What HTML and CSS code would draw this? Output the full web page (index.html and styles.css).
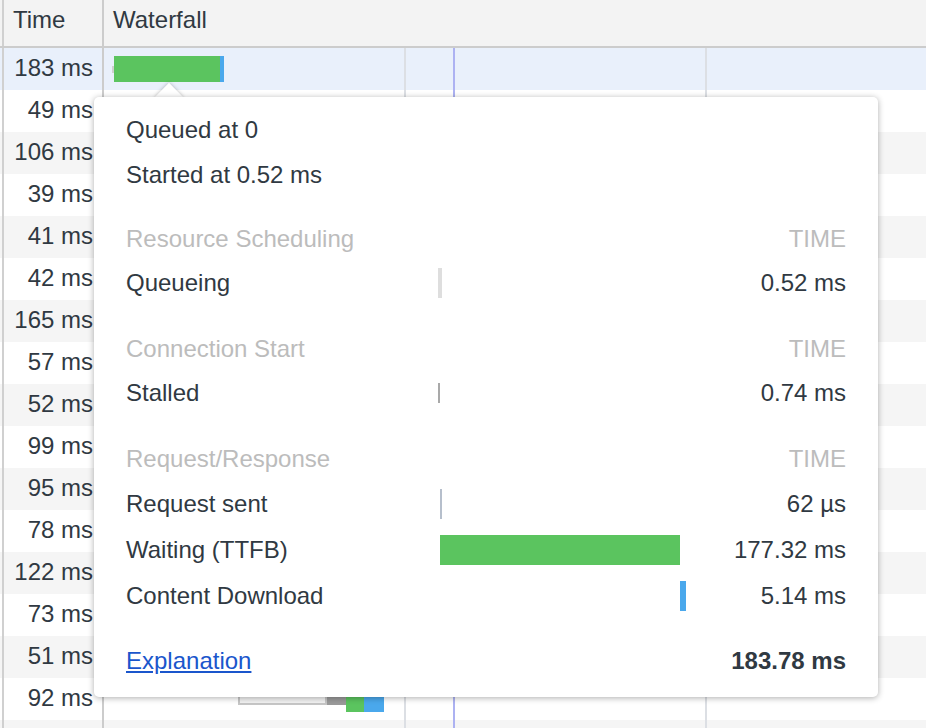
FILE: index.html
```html
<!DOCTYPE html>
<html>
<head>
<meta charset="utf-8">
<link rel="stylesheet" href="styles.css">
</head>
<body>
<div class="net">
  <div class="hdr">
    <div class="c-time">Time</div>
    <div class="c-wf">Waterfall</div>
  </div>
  <div class="rows">
    <div class="row sel"><div class="c-time">183 ms</div><div class="c-wf"><div class="wbar w1"><span class="stub"></span><span class="g" style="width:106px"></span><span class="b" style="width:4px"></span></div></div></div>
    <div class="row"><div class="c-time">49 ms</div><div class="c-wf"></div></div>
    <div class="row alt"><div class="c-time">106 ms</div><div class="c-wf"></div></div>
    <div class="row"><div class="c-time">39 ms</div><div class="c-wf"></div></div>
    <div class="row alt"><div class="c-time">41 ms</div><div class="c-wf"></div></div>
    <div class="row"><div class="c-time">42 ms</div><div class="c-wf"></div></div>
    <div class="row alt"><div class="c-time">165 ms</div><div class="c-wf"></div></div>
    <div class="row"><div class="c-time">57 ms</div><div class="c-wf"></div></div>
    <div class="row alt"><div class="c-time">52 ms</div><div class="c-wf"></div></div>
    <div class="row"><div class="c-time">99 ms</div><div class="c-wf"></div></div>
    <div class="row alt"><div class="c-time">95 ms</div><div class="c-wf"></div></div>
    <div class="row"><div class="c-time">78 ms</div><div class="c-wf"></div></div>
    <div class="row alt"><div class="c-time">122 ms</div><div class="c-wf"></div></div>
    <div class="row"><div class="c-time">73 ms</div><div class="c-wf"></div></div>
    <div class="row alt"><div class="c-time">51 ms</div><div class="c-wf"></div></div>
    <div class="row"><div class="c-time">92 ms</div><div class="c-wf"><div class="wbar w16"><span class="q" style="width:89px"></span><span class="dg" style="width:19px"></span><span class="g" style="width:18px"></span><span class="b" style="width:20px"></span></div></div></div>
    <div class="row alt"><div class="c-time"></div><div class="c-wf"></div></div>
  </div>

  <div class="popup">
    <div class="arrow"></div>
    <div class="pbody">
      <div class="prow top"><div class="lbl">Queued at 0</div></div>
      <div class="prow top"><div class="lbl">Started at 0.52 ms</div></div>

      <div class="prow sec first"><div class="lbl">Resource Scheduling</div><div class="track"></div><div class="val">TIME</div></div>
      <div class="prow"><div class="lbl">Queueing</div><div class="track"><span class="pb queue" style="margin-left:0;width:4px"></span></div><div class="val">0.52 ms</div></div>

      <div class="prow sec"><div class="lbl">Connection Start</div><div class="track"></div><div class="val">TIME</div></div>
      <div class="prow"><div class="lbl">Stalled</div><div class="track"><span class="pb stall" style="margin-left:0;width:2px"></span></div><div class="val">0.74 ms</div></div>

      <div class="prow sec"><div class="lbl">Request/Response</div><div class="track"></div><div class="val">TIME</div></div>
      <div class="prow tall"><div class="lbl">Request sent</div><div class="track"><span class="pb sent" style="margin-left:2px;width:2px"></span></div><div class="val">62 µs</div></div>
      <div class="prow tall"><div class="lbl">Waiting (TTFB)</div><div class="track"><span class="pb wait" style="margin-left:2px;width:240px"></span></div><div class="val">177.32 ms</div></div>
      <div class="prow tall"><div class="lbl">Content Download</div><div class="track"><span class="pb dl" style="margin-left:242px;width:6px"></span></div><div class="val">5.14 ms</div></div>

      <div class="prow foot"><div class="lbl"><a class="link" href="#">Explanation</a></div><div class="track"></div><div class="val total">183.78 ms</div></div>
    </div>
  </div>
</div>
</body>
</html>
```

FILE: styles.css
```css
html, body {
  margin: 0;
  padding: 0;
  background: #ffffff;
}

body {
  font-family: "Liberation Sans", Arial, Helvetica, sans-serif;
  font-size: 24px;
  color: #303942;
  width: 926px;
  height: 728px;
  overflow: hidden;
}

.net {
  position: relative;
  width: 926px;
  height: 728px;
  overflow: hidden;
}

.hdr {
  display: flex;
  height: 46px;
  background: #f3f3f3;
  border-bottom: 2px solid #cccccc;
}

.hdr .c-time,
.hdr .c-wf {
  line-height: 39px;
}

.hdr .c-time {
  text-align: left;
  padding: 0 0 0 9px;
}

.hdr .c-wf {
  padding-left: 9px;
}

.c-time {
  box-sizing: border-box;
  width: 102px;
  margin-left: 2px;
  border-left: 2px solid #d0d0d0;
  border-right: 2px solid #cccccc;
  text-align: right;
  padding-right: 9px;
  white-space: nowrap;
  flex: none;
}

.c-wf {
  flex: 1;
  min-width: 0;
}

.rows {
  display: flex;
  flex-direction: column;
}

.row {
  display: flex;
  height: 42px;
  line-height: 40px;
  background: #ffffff;
}

.row.alt {
  background: #f5f5f5;
}

.row.sel {
  background: #e9f0fb;
}

.row .c-wf {
  background-image:
    linear-gradient(#dcdfe4, #dcdfe4),
    linear-gradient(#adb2f2, #adb2f2),
    linear-gradient(#dcdfe4, #dcdfe4);
  background-size: 2px 100%, 2px 100%, 2px 100%;
  background-position: 300px 0, 349px 0, 601px 0;
  background-repeat: no-repeat;
}

.wbar {
  display: flex;
  align-items: center;
  height: 42px;
}

.wbar span {
  display: block;
  flex: none;
}

.w1 {
  padding-left: 8px;
}

.w16 {
  padding-left: 134px;
}

.wbar .stub {
  width: 2px;
  height: 7px;
  background: #cfcfcf;
}

.wbar .g {
  height: 26px;
  background: #5bc45f;
}

.wbar .b {
  height: 26px;
  background: #4aa8ec;
}

.wbar .q {
  box-sizing: border-box;
  height: 12px;
  border: 2px solid #c6c6c6;
  background: #f2f2f2;
}

.wbar .dg {
  height: 12px;
  background: #9a9a9a;
}

/* popup */
.popup {
  position: absolute;
  left: 94px;
  top: 97px;
  width: 784px;
  height: 600px;
  z-index: 5;
}

.arrow {
  position: absolute;
  left: 65px;
  top: -10px;
  width: 20px;
  height: 20px;
  background: #ffffff;
  transform: rotate(45deg);
  box-shadow: 0 0 4px rgba(0, 0, 0, 0.28);
}

.pbody {
  position: relative;
  box-sizing: border-box;
  height: 100%;
  background: #ffffff;
  border-radius: 5px;
  box-shadow: 0 1px 6px rgba(0, 0, 0, 0.32);
  padding: 10px 32px 13px 32px;
  display: flex;
  flex-direction: column;
}

.prow {
  display: grid;
  grid-template-columns: 312px 248px 160px;
  height: 44px;
  line-height: 42px;
  align-items: center;
  white-space: nowrap;
  flex: none;
}

.prow.top {
  height: 45px;
  line-height: 43px;
}

.prow.tall {
  height: 46px;
  line-height: 44px;
}

.prow.sec {
  margin-top: 22px;
  color: #bcbcbc;
}

.prow.sec.first {
  margin-top: 20px;
}

.prow.foot {
  margin-top: 20px;
}

.val {
  text-align: right;
}

.total {
  font-weight: bold;
}

.track {
  display: flex;
  align-items: center;
  height: 100%;
}

.pb {
  display: block;
  flex: none;
  height: 30px;
}

.pb.queue {
  background: #dedede;
}

.pb.stall {
  height: 20px;
  background: #a9a9a9;
}

.pb.sent {
  background: #b6bfcc;
}

.pb.wait {
  background: #5bc45f;
}

.pb.dl {
  background: #4aa8ec;
}

.link {
  color: #1a56cc;
  text-decoration: underline;
}
```
